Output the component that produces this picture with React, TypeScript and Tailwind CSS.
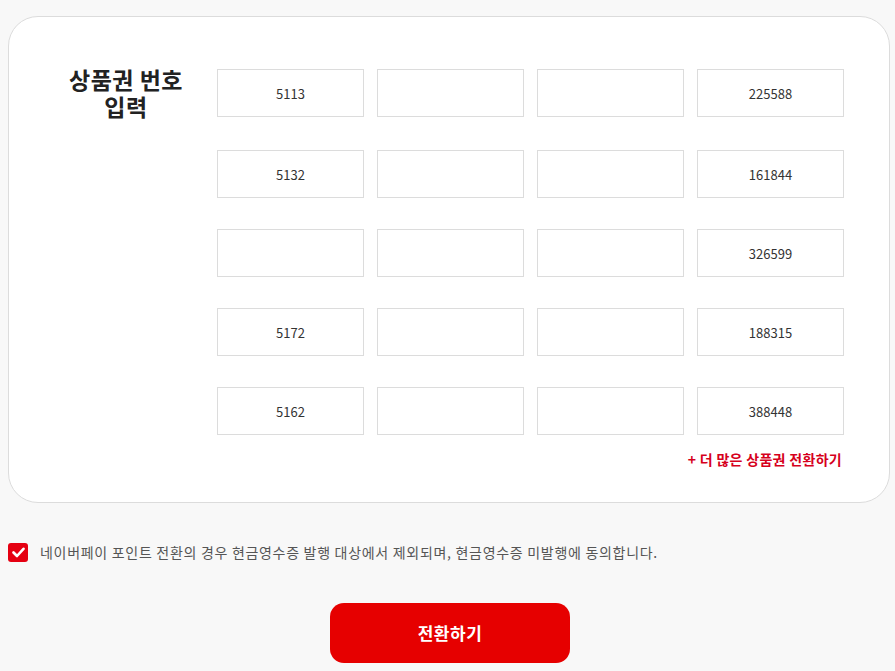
import { useState } from "react";

const rows = [
  ["5113", "", "", "225588"],
  ["5132", "", "", "161844"],
  ["", "", "", "326599"],
  ["5172", "", "", "188315"],
  ["5162", "", "", "388448"],
];

const font = { fontFamily: '"Noto Sans CJK KR", "Noto Sans", sans-serif' };

export default function App() {
  const [agree, setAgree] = useState(true);

  return (
    <div className="min-h-[671px] w-[895px] bg-[#f8f8f8] pt-4" style={font}>
      {/* card */}
      <div className="ml-2 w-[882px] rounded-[30px] border border-[#dcdcdc] bg-white pb-[33px] pt-[52px]">
        <div className="flex">
          <h2 className="ml-[42px] mt-[-3px] w-[150px] text-center text-[23px] font-bold leading-[27px] tracking-[0.5px] text-[#222]">
            상품권 번호
            <br />
            입력
          </h2>
          <div className="ml-[16px] flex flex-col">
            {rows.map((row, i) => (
              <div key={i} className={`flex gap-[13px] ${i === 0 ? "" : i === 1 ? "mt-[33px]" : "mt-[31px]"}`}>
                {row.map((v, j) => (
                  <input
                    key={j}
                    defaultValue={v}
                    className="h-[48px] w-[147px] border border-[#dcdcdc] bg-white text-center text-[13px] text-[#333] outline-none"
                    style={font}
                  />
                ))}
              </div>
            ))}
            <button type="button" className="mt-[14px] self-end pr-[2px] text-[14px] font-bold leading-[20px] tracking-[0.3px] text-[#d6001c]">
              + 더 많은 상품권 전환하기
            </button>
          </div>
        </div>
      </div>

      {/* agree */}
      <label className="ml-2 mt-[39px] flex cursor-pointer items-center gap-3">
        <input type="checkbox" className="hidden" checked={agree} onChange={() => setAgree(!agree)} />
        <span className={`flex h-[19px] w-[20px] items-center justify-center rounded-[3px] ${agree ? "bg-[#e50012]" : "border border-[#ccc] bg-white"}`}>
          {agree && (
            <svg width="13" height="11" viewBox="0 0 13 11" fill="none">
              <path d="M1.5 5.5 L5 9 L11.5 1.8" stroke="white" strokeWidth="2.6" strokeLinecap="round" strokeLinejoin="round" />
            </svg>
          )}
        </span>
        <span className="text-[14px] tracking-[0.7px] text-[#555]">
          네이버페이 포인트 전환의 경우 현금영수증 발행 대상에서 제외되며, 현금영수증 미발행에 동의합니다.
        </span>
      </label>

      <div className="mt-[40px] flex justify-center pl-[5px]">
        <button type="button" className="h-[60px] w-[240px] rounded-[14px] bg-[#e60000] text-[17px] font-bold tracking-[0.5px] text-white">
          전환하기
        </button>
      </div>
    </div>
  );
}
